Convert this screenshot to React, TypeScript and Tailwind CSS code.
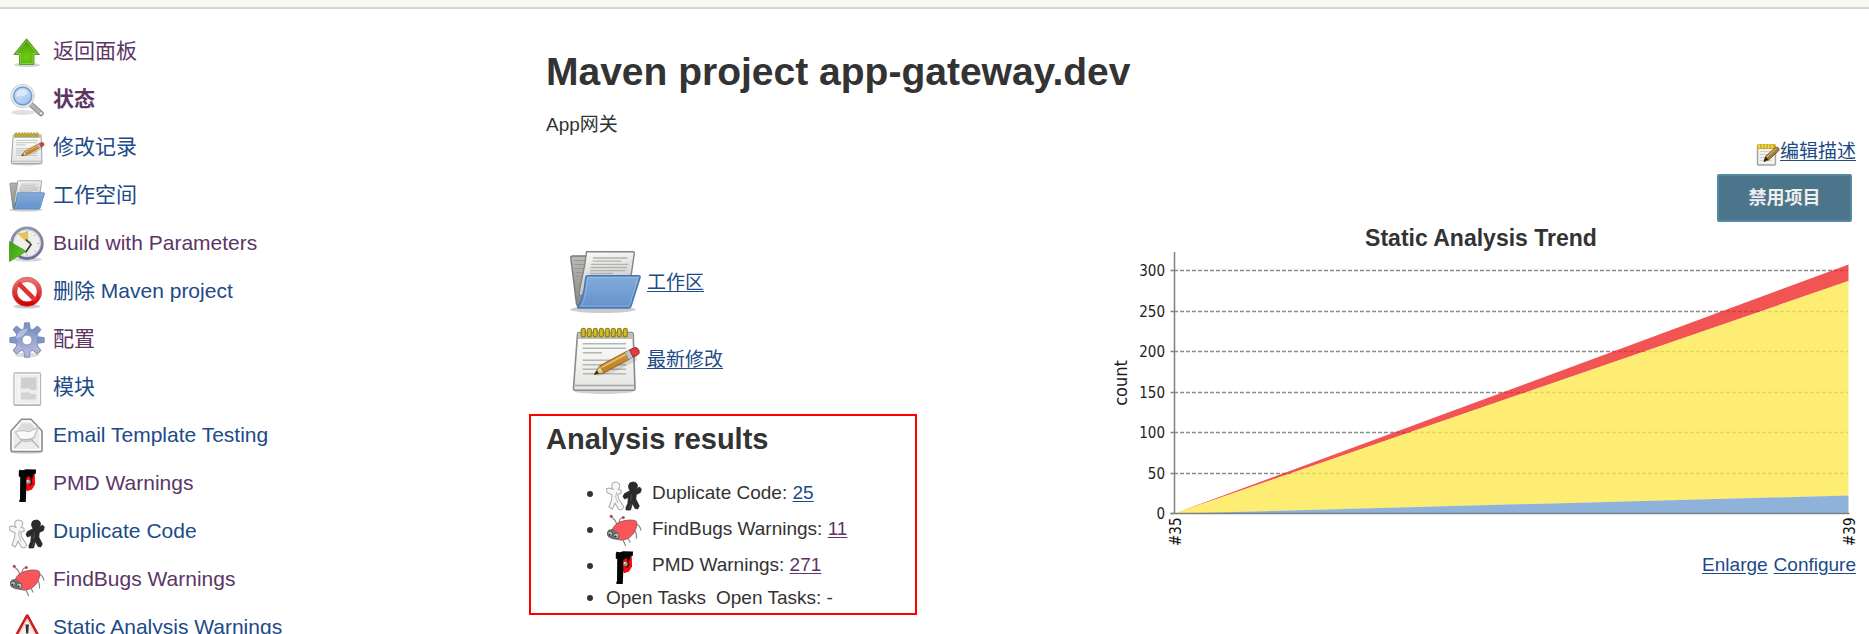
import type { ReactNode } from "react";

type IconProps = { className?: string };

function ArrowUpIcon({ className = "size-9" }: IconProps) {
  return (
    <svg viewBox="0 0 36 36" className={className} aria-hidden="true">
      <defs>
        <radialGradient id="up-fill" cx="0.5" cy="0.7" r="0.6">
          <stop offset="0" stopColor="#6fd010" />
          <stop offset="1" stopColor="#4a9d10" />
        </radialGradient>
      </defs>
      <ellipse cx="18" cy="31" rx="13" ry="2" fill="#000" opacity="0.16" />
      <path d="M17.600 4.800 30.500 20.500H25V30.500H10.500V20.500H4.800Z" fill="url(#up-fill)" stroke="#5aa02c" strokeWidth="1" strokeLinejoin="round" />
      <path d="M17.600 6.800 28 19.500H24V29.500H11.500V19.500H7.200Z" fill="none" stroke="#b6e88a" strokeWidth="0.9" opacity="0.5" />
    </svg>
  );
}

function SearchIcon({ className = "size-9" }: IconProps) {
  return (
    <svg viewBox="0 0 36 36" className={className} aria-hidden="true">
      <defs>
        <linearGradient id="lens" x1="0" y1="0" x2="0.6" y2="1">
          <stop offset="0" stopColor="#ddeafa" />
          <stop offset="1" stopColor="#9fc3f0" />
        </linearGradient>
      </defs>
      <ellipse cx="14" cy="30.500" rx="12" ry="2.500" fill="#000" opacity="0.12" />
      <path d="M21.500 22 32 31.500" stroke="#8b8d89" strokeWidth="5.500" strokeLinecap="round" />
      <path d="M21.500 22 31.500 31" stroke="#b4b6b2" strokeWidth="3.200" strokeLinecap="round" />
      <circle cx="32" cy="31.300" r="1.600" fill="#f3f3f3" stroke="#888" strokeWidth="0.6" />
      <circle cx="13.700" cy="14" r="10.600" fill="url(#lens)" stroke="#c3c5c1" strokeWidth="2.800" />
      <circle cx="13.700" cy="14" r="10.600" fill="none" stroke="#eeeeec" strokeWidth="1.200" />
      <circle cx="13.700" cy="14" r="8.800" fill="none" stroke="#6f9cd6" strokeWidth="1.400" />
      <path d="M7.500 14.500a6.300 6.300 0 0 1 11.500-4c-2.500 3.500-6.500 4.500-11.500 4Z" fill="#fff" opacity="0.45" />
    </svg>
  );
}

function NotepadIcon({ className = "size-9" }: IconProps) {
  const rings = [14.3, 20.3, 26.3, 32.3, 38.3, 44.3, 50.3, 56.3];
  return (
    <svg viewBox="0 0 72 72" className={className} aria-hidden="true">
      <defs>
        <linearGradient id="pad-paper" x1="0" y1="0" x2="0" y2="1">
          <stop offset="0" stopColor="#ffffff" />
          <stop offset="1" stopColor="#e4e4e2" />
        </linearGradient>
        <linearGradient id="pad-pencil" x1="0" y1="0" x2="0.5" y2="1">
          <stop offset="0" stopColor="#e5ac4c" />
          <stop offset="1" stopColor="#b5761f" />
        </linearGradient>
      </defs>
      <ellipse cx="35" cy="68" rx="30" ry="3" fill="#000" opacity="0.18" />
      <path d="M10 9.500H62.500Q64 9.500 64.200 11L66 65Q66 67.300 64 67.300H6.500Q4.400 67.300 4.500 65L8.500 11Q8.700 9.500 10 9.500Z" fill="url(#pad-paper)" stroke="#8a8c88" strokeWidth="1.600" />
      <path d="M9.500 10.300H63.300L63.600 16H9.100Z" fill="#bcbeb9" />
      <path d="M5.800 62.500H65" stroke="#a6a8a3" strokeWidth="1.400" />
      <g stroke="#b4b6b2" strokeWidth="1.500">
        <path d="M13.700 20.700H57M13.700 25.300H57M13.700 29.700H33M13.700 37.300H57M13.700 41.700H57M13.700 46.300H57M13.700 50.700H57" />
      </g>
      {rings.map((x) => (
        <rect key={x} x={x - 2} y="5.300" width="4" height="8.600" rx="2" fill="#cdbb33" stroke="#93830f" strokeWidth="1.200" />
      ))}
      <path d="M26 53.500 45 49 68 37.500V33Z" fill="#000" opacity="0.12" />
      <path d="M25.300 51.300 31 42.600 58 28.200 61.700 35.500 35 49.800Z" fill="url(#pad-pencil)" stroke="#95641a" strokeWidth="1" strokeLinejoin="round" />
      <path d="M25.300 51.300 31 42.600 35 49.800Z" fill="#e4cd98" stroke="#95641a" strokeWidth="0.8" />
      <path d="M25 51.500 28 47.500 30 50.500Z" fill="#2e2a20" />
      <path d="M32.500 44.500 58.800 30.300" stroke="#f0cc84" strokeWidth="1.300" />
      <path d="M56 29.300 61 26.700 64.500 34 59.700 36.500Z" fill="#c3c3c3" stroke="#8a8a8a" strokeWidth="0.8" />
      <path d="M60.500 27 65.500 24.600Q68.500 23.800 70 27.500 71 30.800 68.500 32L64.200 34.200Z" fill="#de3c40" stroke="#93302f" strokeWidth="1" />
    </svg>
  );
}

function FolderIcon({ className = "size-9" }: IconProps) {
  return (
    <svg viewBox="0 0 72 72" className={className} aria-hidden="true">
      <defs>
        <linearGradient id="fold-front" x1="0" y1="0" x2="0" y2="1">
          <stop offset="0" stopColor="#84abda" />
          <stop offset="1" stopColor="#6293cb" />
        </linearGradient>
        <linearGradient id="fold-back" x1="0" y1="0" x2="0" y2="1">
          <stop offset="0" stopColor="#b9bbb7" />
          <stop offset="1" stopColor="#868884" />
        </linearGradient>
        <linearGradient id="fold-doc" x1="0" y1="0" x2="0.2" y2="1">
          <stop offset="0" stopColor="#fdfdfd" />
          <stop offset="1" stopColor="#bfc0bd" />
        </linearGradient>
      </defs>
      <ellipse cx="34" cy="63.500" rx="33" ry="3.500" fill="#000" opacity="0.2" />
      <path d="M3.500 10H18L30 14V60H9.500Q7.800 60 7.500 58L1.800 12Q1.800 10 3.500 10Z" fill="url(#fold-back)" stroke="#777975" strokeWidth="1.400" />
      <path d="M5 14.500H17M5.300 18.500H16M5.800 22.500H15M6.300 26.500H14M7 30.500H13" stroke="#959793" strokeWidth="1" />
      <path d="M17.500 5.700H64Q65.500 5.700 65.300 7.500L61.500 34 11 50Q9.500 48.500 10.500 44L15.500 20Q16.800 12 17.500 5.700Z" fill="url(#fold-doc)" stroke="#838581" strokeWidth="1.400" strokeLinejoin="round" />
      <path d="M24 12H58.500M23.500 15.200H52M22 18.300H59M21.500 21.500H58M21 24.600H56M21 27.500H44" stroke="#b0b2ae" strokeWidth="1.300" />
      <path d="M19 29.700H69.500Q71.500 29.700 71 31.500L62 60Q61.400 61.900 59.500 61.900H9.500Q7.800 61.900 9.300 60 14.500 53.500 16.700 32Q17 29.700 19 29.700Z" fill="url(#fold-front)" stroke="#4375b5" strokeWidth="1.500" />
      <path d="M19 31.400H69L60.300 60H12.500Q16.800 53 18.600 32Z" fill="none" stroke="#a9c6e8" strokeWidth="1" opacity="0.5" />
    </svg>
  );
}

function BuildIcon({ className = "size-9" }: IconProps) {
  return (
    <svg viewBox="0 0 36 36" className={className} aria-hidden="true">
      <defs>
        <linearGradient id="clock-ring" x1="0" y1="0" x2="0" y2="1">
          <stop offset="0" stopColor="#9094a6" />
          <stop offset="1" stopColor="#6c6e9a" />
        </linearGradient>
        <linearGradient id="play" x1="0" y1="0" x2="1" y2="0.6">
          <stop offset="0" stopColor="#3f9a10" />
          <stop offset="1" stopColor="#5cc81c" />
        </linearGradient>
      </defs>
      <ellipse cx="19" cy="33.500" rx="14" ry="2" fill="#000" opacity="0.16" />
      <circle cx="18" cy="17.300" r="15.200" fill="#eeeeea" stroke="url(#clock-ring)" strokeWidth="3" />
      <circle cx="18" cy="17.300" r="13.400" fill="none" stroke="#d4d5d8" strokeWidth="0.9" />
      <path d="M9 8 18.500 6.300 18.800 16.500Z" fill="#e6c556" stroke="#d3ab32" strokeWidth="0.5" />
      <path d="M17 13.500 22 18.500 16.500 26.500" fill="none" stroke="#33352f" strokeWidth="1.600" />
      <path d="M22 17.500 20 15.300" stroke="#888" strokeWidth="1.600" />
      <path d="M18 5v1.500M30 17.300h-1.500M26.500 8.800l-1 1M26.500 25.800l-1-1M18 28v1.500" stroke="#999" strokeWidth="1" />
      <path d="M0.500 15.500 17 25.300 0.500 35.500Z" fill="url(#play)" stroke="#4f9a28" strokeWidth="0.9" strokeLinejoin="round" />
    </svg>
  );
}

function DeleteIcon({ className = "size-9" }: IconProps) {
  return (
    <svg viewBox="0 0 36 36" className={className} aria-hidden="true">
      <defs>
        <linearGradient id="stop-ring" x1="0" y1="0" x2="0" y2="1">
          <stop offset="0" stopColor="#ee7272" />
          <stop offset="0.5" stopColor="#dd3a3a" />
          <stop offset="1" stopColor="#d40000" />
        </linearGradient>
      </defs>
      <ellipse cx="18" cy="32.500" rx="13.500" ry="2" fill="#000" opacity="0.2" />
      <circle cx="18" cy="17.800" r="12.300" fill="#fff" stroke="url(#stop-ring)" strokeWidth="5" />
      <path d="M9.500 9.300 26.500 26.300" stroke="#e03434" strokeWidth="4.600" />
      <circle cx="18" cy="17.800" r="14.600" fill="none" stroke="#c65a5a" strokeWidth="0.6" />
    </svg>
  );
}

function GearIcon({ className = "size-9" }: IconProps) {
  const teeth = [0, 45, 90, 135, 180, 225, 270, 315];
  return (
    <svg viewBox="0 0 36 36" className={className} aria-hidden="true">
      <defs>
        <linearGradient id="gear-fill" gradientUnits="userSpaceOnUse" x1="12" y1="0" x2="20" y2="36">
          <stop offset="0" stopColor="#6482b4" />
          <stop offset="0.5" stopColor="#94a5d0" />
          <stop offset="1" stopColor="#bdbbdf" />
        </linearGradient>
      </defs>
      <ellipse cx="18" cy="33" rx="12" ry="2.500" fill="#000" opacity="0.14" />
      <g fill="#7d8db8">
        {teeth.map((a) => (
          <path key={a} d="M14.200 8 15 1.200Q15.100 0.300 16 0.300H20Q20.900 0.300 21 1.200L21.800 8Z" transform={`rotate(${a} 18 18)`} />
        ))}
        <circle cx="18" cy="18" r="12" />
      </g>
      <circle cx="18" cy="18" r="11.300" fill="url(#gear-fill)" />
      {teeth.map((a) => (
        <path key={a} d="M15.100 8.500 15.900 1.300H20.100L20.900 8.500Z" fill={a > 90 && a < 270 ? "#b3b3da" : "#7f95c4"} transform={`rotate(${a} 18 18)`} />
      ))}
      <path d="M7 17a11 11 0 0 1 7-9.500l5-1q-3 8-12 10.500Z" fill="#dfe6f5" opacity="0.5" />
      <circle cx="18" cy="18" r="5" fill="#fff" stroke="#8a95bd" strokeWidth="1" />
    </svg>
  );
}

function ModuleIcon({ className = "size-9" }: IconProps) {
  return (
    <svg viewBox="0 0 36 36" className={className} aria-hidden="true">
      <rect x="5" y="3" width="26.500" height="32" rx="1" fill="#ededeb" stroke="#b4b6b2" strokeWidth="1.300" />
      <rect x="6.300" y="4.300" width="23.900" height="29.400" fill="none" stroke="#fbfbfb" strokeWidth="1" />
      <rect x="8" y="6.500" width="3" height="25" fill="#f4f4f4" />
      <path d="M12 7.500H27.500V20H21.500V18.500H12Z" fill="#cfcfcf" />
      <path d="M12 22.500H21V24H27V29.500H12Z" fill="#d3d3d3" />
      <path d="M5 35.200H31.500" stroke="#999" strokeWidth="0.8" opacity="0.6" />
    </svg>
  );
}

function MailIcon({ className = "size-9" }: IconProps) {
  return (
    <svg viewBox="0 0 36 36" className={className} aria-hidden="true">
      <ellipse cx="17.500" cy="34" rx="16.500" ry="1.800" fill="#000" opacity="0.18" />
      <path d="M12.500 1.200H22L33 13V32Q33 33.500 31.500 33.500H3.500Q2 33.500 2 32V13Z" fill="#ececea" stroke="#8b8d89" strokeWidth="1.600" strokeLinejoin="round" />
      <path d="M13.200 3H21.500L31.200 13.600V31.700H3.800V13.600Z" fill="none" stroke="#fff" strokeWidth="1.200" />
      <path d="M6.500 14Q12 11.500 20 13.500L29 9.500 25.500 19Q17.500 23.500 10.500 20.500Z" fill="#fafafa" stroke="#c1c3bf" strokeWidth="1.300" />
      <path d="M13 5.500H22L26.500 10.300 20 12.500Q12 11 8.500 12Z" fill="#dcdcda" />
      <path d="M5.500 29.500 13.500 21.700H22.500L30 29.500" fill="none" stroke="#b4b6b2" strokeWidth="1.500" />
      <path d="M10.500 20.500 15 23.500H21L25.500 19" fill="none" stroke="#c0c2be" strokeWidth="1.100" />
    </svg>
  );
}

function PmdIcon({ className = "size-9" }: IconProps) {
  return (
    <svg viewBox="0 0 36 36" className={className} aria-hidden="true">
      <path d="M17 9 25.800 8.500 26 18.500 23 23.500 18 25.200 16.500 22Z" fill="#f5090d" />
      <path d="M10.500 3.800 14 4.300 17 3.300 27 3.500 26.800 7.700 24.500 8.800 23 13.500 20 10 17.200 12 17.300 22 16.800 36 10.500 36.300 10.200 34 11 33.500 11.200 11 9.800 10.500 9.800 5.500Z" fill="#050505" />
      <circle cx="19.500" cy="15.800" r="2.300" fill="#8f9693" />
      <circle cx="18.800" cy="15" r="1" fill="#dfe4e2" />
      <path d="M21.500 12 22.800 17 20.500 19.500" fill="none" stroke="#30100f" strokeWidth="1.200" />
    </svg>
  );
}

function DuplicateIcon({ className = "size-9" }: IconProps) {
  return (
    <svg viewBox="0 0 36 36" className={className} aria-hidden="true">
      <path d="M9.500 6Q13.700 6.300 13.800 9.800 13.600 11.800 12 13.300L14.800 14 15.300 17 11.800 18.500 12.500 22.500 17.800 31 15.500 34 12.500 33.300 9 27 6.500 33 3 31 5.500 24 6 18.800 1 16.500 0.500 12.500 3.500 12 7.200 13.500Q5.600 11.500 5.800 9.200 6.400 6 9.500 6Z" fill="#f7f7f7" stroke="#b0b0b0" strokeWidth="1.100" strokeLinejoin="round" />
      <path d="M11 16 9.500 21 12 27" fill="none" stroke="#c9c9c9" strokeWidth="1.300" />
      <path d="M27 6Q31.300 6.200 31.500 10 31.400 12 30.200 13.200L33.500 11 35.300 13 34.500 16.500 30.300 18.500 29.800 23 33.300 30 31.800 33 29 32.500 26.500 27.500 24.500 34 20 34 20 31.500 21.800 27.500 22.300 21.500 18.500 23 17 20.500 18.500 17.500 24 14.700Q22.400 12.500 22.500 10 22.900 6.200 27 6Z" fill="#2b2b2b" stroke="#222" strokeWidth="0.7" strokeLinejoin="round" />
      <path d="M25.500 18.500 24.500 25M23 32.500 25.500 27.500" fill="none" stroke="#555" strokeWidth="0.9" />
    </svg>
  );
}

function BugIcon({ className = "size-9" }: IconProps) {
  return (
    <svg viewBox="0 0 36 36" className={className} aria-hidden="true">
      <g fill="none" stroke="#8c8c8c" strokeWidth="1.300" strokeLinecap="round">
        <path d="M10.500 13.500Q11 9 5.500 5" />
        <path d="M13.500 11Q12.500 7 16.500 5.500" />
        <path d="M29 11.500Q34 13 34.800 18" />
        <path d="M27.500 18Q31 20 30.500 26" />
        <path d="M22 26.500 24 30" />
        <path d="M17 28 19.500 33.500" />
      </g>
      <path d="M6 18Q8.500 11.500 16 9.300 24 7 29.500 8.800 31.300 9.800 30.800 13 29.500 21 23.500 25.500 16.500 29.800 10 27 5 24.500 6 18Z" fill="#fa555b" stroke="#8d4a4c" strokeWidth="0.8" />
      <path d="M1 20Q3 16 7.500 17.500 12.500 20 13.500 24.500 12.500 28 8.500 27.500 3.500 26.500 1.500 24Z" fill="#6c7170" />
      <circle cx="4" cy="21.800" r="2.400" fill="#c9cdcc" stroke="#444" strokeWidth="0.8" />
      <circle cx="10.300" cy="23.800" r="2.700" fill="#c2c7c6" stroke="#444" strokeWidth="0.8" />
      <circle cx="3.500" cy="22.600" r="1" fill="#222" />
      <circle cx="9.600" cy="24.500" r="1.100" fill="#222" />
      <circle cx="5.200" cy="4.300" r="1.500" fill="#b54747" />
      <circle cx="17.300" cy="5.500" r="1.500" fill="#b54747" />
    </svg>
  );
}

function AlertIcon({ className = "size-9" }: IconProps) {
  return (
    <svg viewBox="0 0 36 36" className={className} aria-hidden="true">
      <path d="M18.200 6 32 31.500H4.400Z" fill="#f1f1f0" stroke="#cc1c1c" strokeWidth="3.400" strokeLinejoin="round" />
      <path d="M18.200 8.600 29.500 29.700H6.900Z" fill="none" stroke="#fff" strokeWidth="0.9" />
      <path d="M16.500 14.500H19.900L19.200 23.500H17.200Z" fill="#333" />
      <circle cx="18.200" cy="26.600" r="1.600" fill="#333" />
    </svg>
  );
}

function EditIcon({ className = "size-6" }: IconProps) {
  return (
    <svg viewBox="0 0 24 24" className={className} aria-hidden="true">
      <rect x="1.500" y="4" width="18" height="19" rx="1" fill="#f1f1ef" stroke="#a0a29e" strokeWidth="1.400" />
      <path d="M4 9.500H16M4 12.500H11M4 15.500H8M4 18.500H15" stroke="#cfd1cd" strokeWidth="1.200" />
      <rect x="1" y="2" width="19" height="5" rx="1.500" fill="#cdae20" />
      <path d="M3.200 3V5.500M6.400 3V5.500M9.600 3V5.500M12.800 3V5.500M16 3V5.500" stroke="#eed95e" strokeWidth="1.600" strokeLinecap="round" />
      <path d="M8 19.500 9.500 14.500 19.500 5.500Q21.500 4.500 22.800 6.500 23.500 8 22.500 9L12.800 17.800Z" fill="#a67a3c" stroke="#6d4f22" strokeWidth="0.9" strokeLinejoin="round" />
      <path d="M10.500 15.200 20.500 6.300" stroke="#d0aa6a" strokeWidth="1.200" />
      <path d="M7.800 19.700 9.300 14.800 12.500 17.600Z" fill="#2a1f10" />
    </svg>
  );
}

type Task = { label: string; icon: ReactNode; visited?: boolean; current?: boolean };

const tasks: Task[] = [
  { label: "返回面板", icon: <ArrowUpIcon />, visited: true },
  { label: "状态", icon: <SearchIcon />, visited: true, current: true },
  { label: "修改记录", icon: <NotepadIcon /> },
  { label: "工作空间", icon: <FolderIcon /> },
  { label: "Build with Parameters", icon: <BuildIcon />, visited: true },
  { label: "删除 Maven project", icon: <DeleteIcon /> },
  { label: "配置", icon: <GearIcon />, visited: true },
  { label: "模块", icon: <ModuleIcon /> },
  { label: "Email Template Testing", icon: <MailIcon /> },
  { label: "PMD Warnings", icon: <PmdIcon />, visited: true },
  { label: "Duplicate Code", icon: <DuplicateIcon /> },
  { label: "FindBugs Warnings", icon: <BugIcon />, visited: true },
  { label: "Static Analysis Warnings", icon: <AlertIcon /> },
];

function TaskList() {
  return (
    <nav className="w-[529px] shrink-0 pl-[9px] pt-[19px]">
      <ul>
        {tasks.map((t) => (
          <li key={t.label} className="flex h-12 items-center">
            <a
              href="#"
              className={`flex items-center gap-2 text-[21px] leading-7 ${t.visited ? "text-[#5c3566]" : "text-[#204a87]"} ${t.current ? "font-bold" : ""}`}
            >
              {t.icon}
              <span className="pb-0.5">{t.label}</span>
            </a>
          </li>
        ))}
      </ul>
    </nav>
  );
}

const ticks = [
  { value: 300, y: 18 },
  { value: 250, y: 59 },
  { value: 200, y: 99 },
  { value: 150, y: 140 },
  { value: 100, y: 180 },
  { value: 50, y: 221 },
  { value: 0, y: 261 },
];

function TrendChart() {
  return (
    <svg
      viewBox="0 0 750 296"
      role="img"
      aria-label="Static Analysis Trend"
      className="w-full overflow-visible font-['DejaVu_Sans_Condensed','Noto_Sans',sans-serif] text-[15px] font-medium"
    >
      {ticks.slice(0, 6).map((t) => (
        <path key={t.value} d={`M68 ${t.y + 0.5}H742`} stroke="#8c8c8c" strokeWidth="1.400" strokeDasharray="4 2" />
      ))}
      <path d="M68.500 261.500 742.500 12.500V29Z" fill="#ef2929" fillOpacity="0.8" />
      <path d="M68.500 261.500 742.500 29V243.500Z" fill="#fce94f" fillOpacity="0.8" />
      <path d="M68.500 261.500 742.500 243.500V261.500Z" fill="#729fcf" fillOpacity="0.8" />
      <path d="M68.500 0V262M64.500 261.500H743.500" stroke="#808080" strokeWidth="1.500" fill="none" />
      {ticks.map((t) => (
        <g key={t.value}>
          <path d={`M64.500 ${t.y + 0.5}H68.500`} stroke="#808080" strokeWidth="1.500" />
          <text x="59" y={t.y + 6} textAnchor="end" fill="#1c1c1c">
            {t.value}
          </text>
        </g>
      ))}
      <text transform="translate(21 131) rotate(-90)" textAnchor="middle" fill="#1c1c1c" className="text-[18px]">
        count
      </text>
      <text transform="translate(75 294) rotate(-90)" fill="#111">
        #35
      </text>
      <text transform="translate(749 294) rotate(-90)" fill="#111">
        #39
      </text>
    </svg>
  );
}

type Result = { icon: ReactNode; label: string; count: string; visited?: boolean };

const results: Result[] = [
  { icon: <DuplicateIcon />, label: "Duplicate Code:", count: "25" },
  { icon: <BugIcon />, label: "FindBugs Warnings:", count: "11", visited: true },
  { icon: <PmdIcon />, label: "PMD Warnings:", count: "271", visited: true },
];

function Bullet() {
  return <span className="mr-[13px] size-1.5 rounded-full bg-[#333]" />;
}

function AnalysisResults() {
  return (
    <section className="mt-[19px] w-[388px] border-2 border-[#ff0000] pb-px pl-[15px] pt-1.5">
      <h2 className="mb-5 text-[29px] font-bold leading-[34px]">Analysis results</h2>
      <ul className="pl-[41px]">
        {results.map((r) => (
          <li key={r.label} className="flex h-9 items-center">
            <Bullet />
            {r.icon}
            <span className="ml-2.5 pb-0.5">
              {r.label}{" "}
              <a href="#" className={`underline underline-offset-2 ${r.visited ? "text-[#5c3566]" : "text-[#204a87]"}`}>
                {r.count}
              </a>
            </span>
          </li>
        ))}
        <li className="flex h-7 items-center">
          <Bullet />
          <span>Open Tasks</span>
          <span className="ml-2.5">Open Tasks: -</span>
        </li>
      </ul>
    </section>
  );
}

export default function App() {
  return (
    <div className="h-screen overflow-hidden bg-white font-['Liberation_Sans','Noto_Sans_CJK_SC',sans-serif] text-[19px] leading-7 text-[#333]">
      <header className="h-[9px] border-b-2 border-[#d3d7cf] bg-[#f6faf2]" />
      <div className="flex">
        <TaskList />
        <main className="min-w-0 flex-1 pr-[13px] pt-10">
          <h1 className="pl-[17px] text-[39px] font-bold leading-[46px]">Maven project app-gateway.dev</h1>
          <div className="flex justify-between">
            <div className="pt-4">
              <p className="pl-[17px]">App网关</p>
              <div className="mt-[107px] flex flex-col items-start gap-[5px] pl-10">
                <a href="#" className="flex items-center gap-1.5 text-[#204a87] underline underline-offset-2">
                  <FolderIcon className="size-[72px]" />
                  <span className="pt-0.5">工作区</span>
                </a>
                <a href="#" className="flex items-center gap-1.5 text-[#204a87] underline underline-offset-2">
                  <NotepadIcon className="size-[72px]" />
                  <span className="pt-0.5">最新修改</span>
                </a>
              </div>
              <AnalysisResults />
            </div>
            <div className="flex w-[750px] flex-col items-end pt-[43px]">
              <a href="#" className="flex items-center text-[#204a87] underline underline-offset-2">
                <EditIcon className="mt-1 size-6" />
                编辑描述
              </a>
              <button type="button" className="mr-1 mt-2 h-12 w-[135px] rounded-xs border-2 border-[#5788a1] bg-[#4b758b] text-lg font-bold text-[#eee]">
                禁用项目
              </button>
              <h3 className="mt-0.5 self-center text-[23px] font-bold leading-7">Static Analysis Trend</h3>
              <TrendChart />
              <div className="mt-[3px] flex gap-1.5 text-[#204a87]">
                <a href="#" className="underline underline-offset-2">Enlarge</a>
                <a href="#" className="underline underline-offset-2">Configure</a>
              </div>
            </div>
          </div>
        </main>
      </div>
    </div>
  );
}
